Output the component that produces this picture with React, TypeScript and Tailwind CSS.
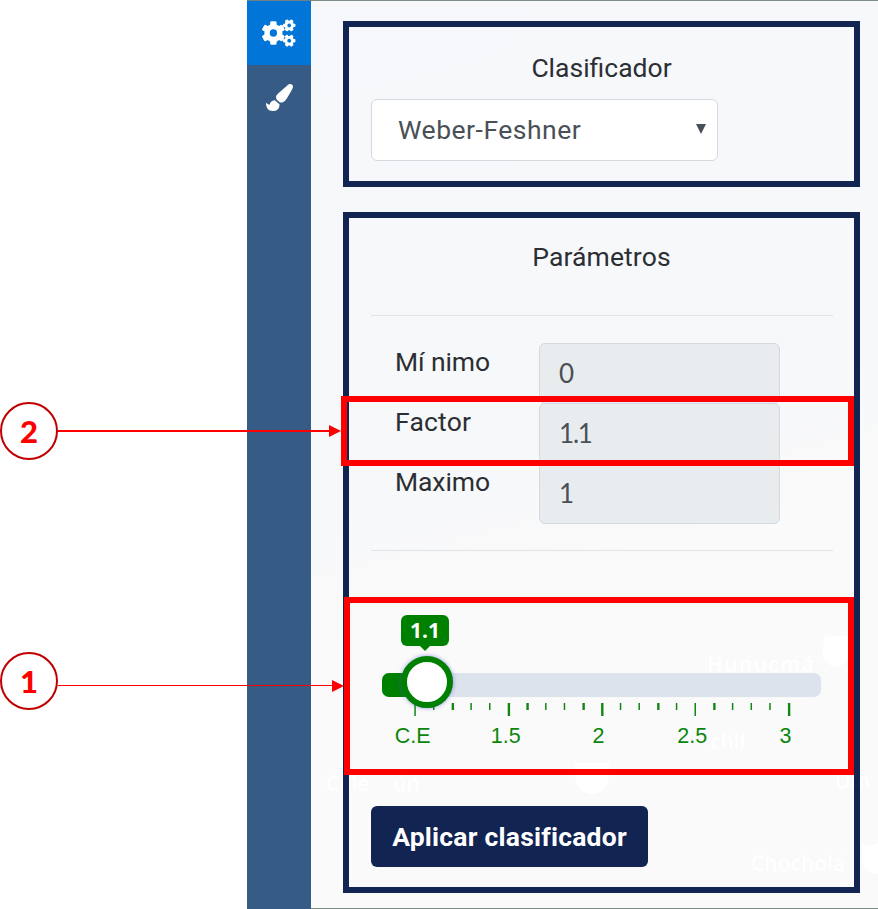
import type { ReactNode } from 'react';
import { FaPaintBrush } from 'react-icons/fa';

const ticks = Array.from({ length: 21 }, (_, i) => i);
const boldTicks = [2, 5, 6, 9, 10, 13, 16, 20];

function Gear({ x, y, r, turn }: { x: number; y: number; r: number; turn: number }) {
  return (
    <g transform={`translate(${x} ${y}) rotate(${turn})`}>
      <circle r={r * 0.77} fill="currentColor" />
      {[0, 60, 120, 180, 240, 300].map((a) => (
        <rect key={a} x={-r * 0.27} y={-r} width={r * 0.54} height={r} rx={r * 0.12} transform={`rotate(${a})`} fill="currentColor" />
      ))}
      <circle r={r * 0.31} fill="#0275d8" />
    </g>
  );
}

function GearsIcon() {
  return (
    <svg width="34" height="28" viewBox="0 0 34 28">
      <Gear x={11.4} y={14} r={11.8} turn={0} />
      <Gear x={27.2} y={6.4} r={6.2} turn={30} />
      <Gear x={27.2} y={21.7} r={6.2} turn={30} />
    </svg>
  );
}

function Row({ label, value, labelClass }: { label: string; value: string; labelClass: string }) {
  return (
    <div className="flex h-[60px]">
      <div className={`w-[168px] pt-[3px] pl-6 text-[26.5px] leading-[32px] whitespace-nowrap ${labelClass}`}>{label}</div>
      <div className="flex h-[61px] w-[241px] items-center rounded-[6px] border border-[#d3d9df] bg-[#e8ecef] pb-px pl-[19px] font-['Lato',sans-serif] text-[26px] tracking-[-1.2px] text-[#495057]">
        {value}
      </div>
    </div>
  );
}

function Card({ className, children }: { className: string; children: ReactNode }) {
  return <section className={`relative w-[517px] border-[6px] border-[#122452] px-[22px] ${className}`}>{children}</section>;
}

function Callout({ n, children }: { n: string; children: ReactNode }) {
  return (
    <div className="flex h-[58px] items-center">
      <div className="flex size-[58px] shrink-0 items-center justify-center rounded-full border-2 border-[#c00000] bg-white font-['Lato',sans-serif] text-[31px] font-black text-[#ff0000]">
        {n}
      </div>
      {children}
    </div>
  );
}

function ArrowHead() {
  return <div className="border-y-[6px] border-l-[12px] border-y-transparent border-l-[#ff0000]" />;
}

function Slider() {
  return (
    <div className="ml-[11px] w-[439px]">
      <div className="flex w-[86px] flex-col items-center">
        <div className="flex h-[31px] w-[48px] items-center justify-center rounded-[6px] bg-[#008000] font-['Open_Sans',sans-serif] text-[21px] font-bold text-white">
          1.1
        </div>
        <div className="border-x-[5px] border-t-[5px] border-x-transparent border-t-[#008000]" />
      </div>
      <div className="relative mt-[22px] flex h-[24px] items-center rounded-[7px] bg-[#dde3ec]">
        <div className="h-full w-[40px] rounded-l-[7px] bg-[#008000]" />
        <div className="absolute -top-[17px] left-[19px] size-[52px] rounded-full border-[6px] border-[#008000] bg-white shadow-[0_0_4px_rgba(80,80,220,0.6)]" />
      </div>
      <svg className="mt-[6px] block" width="439" height="14">
        {ticks.map((i) => (
          <rect
            key={i}
            x={32.3 + i * 18.68}
            y="0"
            width={boldTicks.includes(i) ? 2.4 : 1.5}
            height={i % 5 === 0 ? 13 : 7}
            fill="#138613"
          />
        ))}
      </svg>
      <div className="mr-[-11px] grid w-[466px] grid-cols-5 pt-[6px] -ml-[16px] text-center font-['Liberation_Sans',sans-serif] text-[21.5px] leading-[26px] text-[#0b860b]">
        <span>C.E</span>
        <span>1.5</span>
        <span className="pr-px">2</span>
        <span>2.5</span>
        <span>3</span>
      </div>
    </div>
  );
}

function MapLabels() {
  return (
    <svg className="absolute inset-0" width="567" height="907" fill="#ffffff" fontFamily="'Open Sans', sans-serif" fontSize="21" fontWeight="600">
      <text x="396" y="671" textLength="107">Hunucmá</text>
      <text x="399" y="748">chil</text>
      <text x="15" y="790">Cele</text>
      <text x="82" y="790">ún</text>
      <text x="440" y="870">Chocholá</text>
      <text x="524" y="788">Um</text>
      <path d="M514 633q12 5 24 0v22q-5 11-13 11-11-2-14-12z" />
      <path d="M264 762h34v14q-4 17-17 17t-17-17z" />
      <path d="M551 842q8 4 16 0v31q-14-1-16-14z" />
    </svg>
  );
}

export default function App() {
  return (
    <div className="relative flex h-[909px] w-[878px] overflow-hidden bg-white pl-[247px] font-['Roboto',sans-serif] text-[#2b2f33]">
      <nav className="flex w-16 shrink-0 flex-col border-t border-[#6f7f86] bg-[#365b84] text-white">
        <div className="flex h-[64px] items-center justify-center bg-[#0275d8]">
          <GearsIcon />
        </div>
        <div className="flex h-16 items-center justify-center">
          <FaPaintBrush size={27} />
        </div>
      </nav>
      <main className="relative flex-1 border-y border-[#7e8c86] bg-[linear-gradient(165deg,#f6f8fb_0%,#f7f8fa_48%,#fafafa_62%,#fafafa_100%)] pt-[20px] pl-8">
        <MapLabels />
        <Card className="h-[166px]">
          <h2 className="pt-[23px] text-center text-[26.5px] leading-[36px]">Clasificador</h2>
          <div className="mt-[13px] flex h-[62px] w-[347px] items-center justify-between rounded-[6px] border border-[#d5dae0] bg-white pr-[11px] pl-[26px]">
            <span className="text-[26.5px] tracking-[0.5px] text-[#495057]">Weber-Feshner</span>
            <svg width="10" height="10" className="mb-[2px]">
              <path d="M0 0H10L5 10Z" fill="#495057" />
            </svg>
          </div>
        </Card>
        <Card className="mt-[25px] h-[681px]">
          <h2 className="pt-[21px] text-center text-[26.5px] leading-[36px] tracking-[0.1px]">Parámetros</h2>
          <hr className="mt-[40px] w-[462px] border-[#e1e4e7]" />
          <div className="mt-[27px]">
            <Row label="Mí nimo" value="0" labelClass="tracking-[-0.1px]" />
            <Row label="Factor" value="1.1" labelClass="tracking-[0.2px]" />
            <Row label="Maximo" value="1" labelClass="tracking-[-0.1px]" />
          </div>
          <hr className="mt-[27px] mb-[64px] w-[462px] border-[#e1e4e7]" />
          <Slider />
          <button className="mt-[57px] flex h-[61px] w-[277px] items-center justify-center rounded-[6px] bg-[#122452] text-[26.5px] font-bold tracking-[0.22px] whitespace-nowrap text-white">
            Aplicar clasificador
          </button>
        </Card>
      </main>
      <div className="absolute inset-0 flex flex-col pt-[396px]">
        <div className="flex h-[70px] w-[854px] items-center">
          <div className="w-[341px]">
            <Callout n="2">
              <div className="h-[2px] flex-1 bg-[#ff0000]" />
              <ArrowHead />
            </Callout>
          </div>
          <div className="h-full flex-1 border-[6px] border-[#ff0000]" />
        </div>
        <div className="mt-[131px] flex h-[178px] w-[854px]">
          <div className="w-[344px] pt-[55px]">
            <Callout n="1">
              <div className="mt-[9px] flex flex-1 items-center">
                <div className="h-px flex-1 bg-[#ff0000]" />
                <ArrowHead />
              </div>
            </Callout>
          </div>
          <div className="h-full flex-1 border-[6px] border-[#ff0000]" />
        </div>
      </div>
    </div>
  );
}
